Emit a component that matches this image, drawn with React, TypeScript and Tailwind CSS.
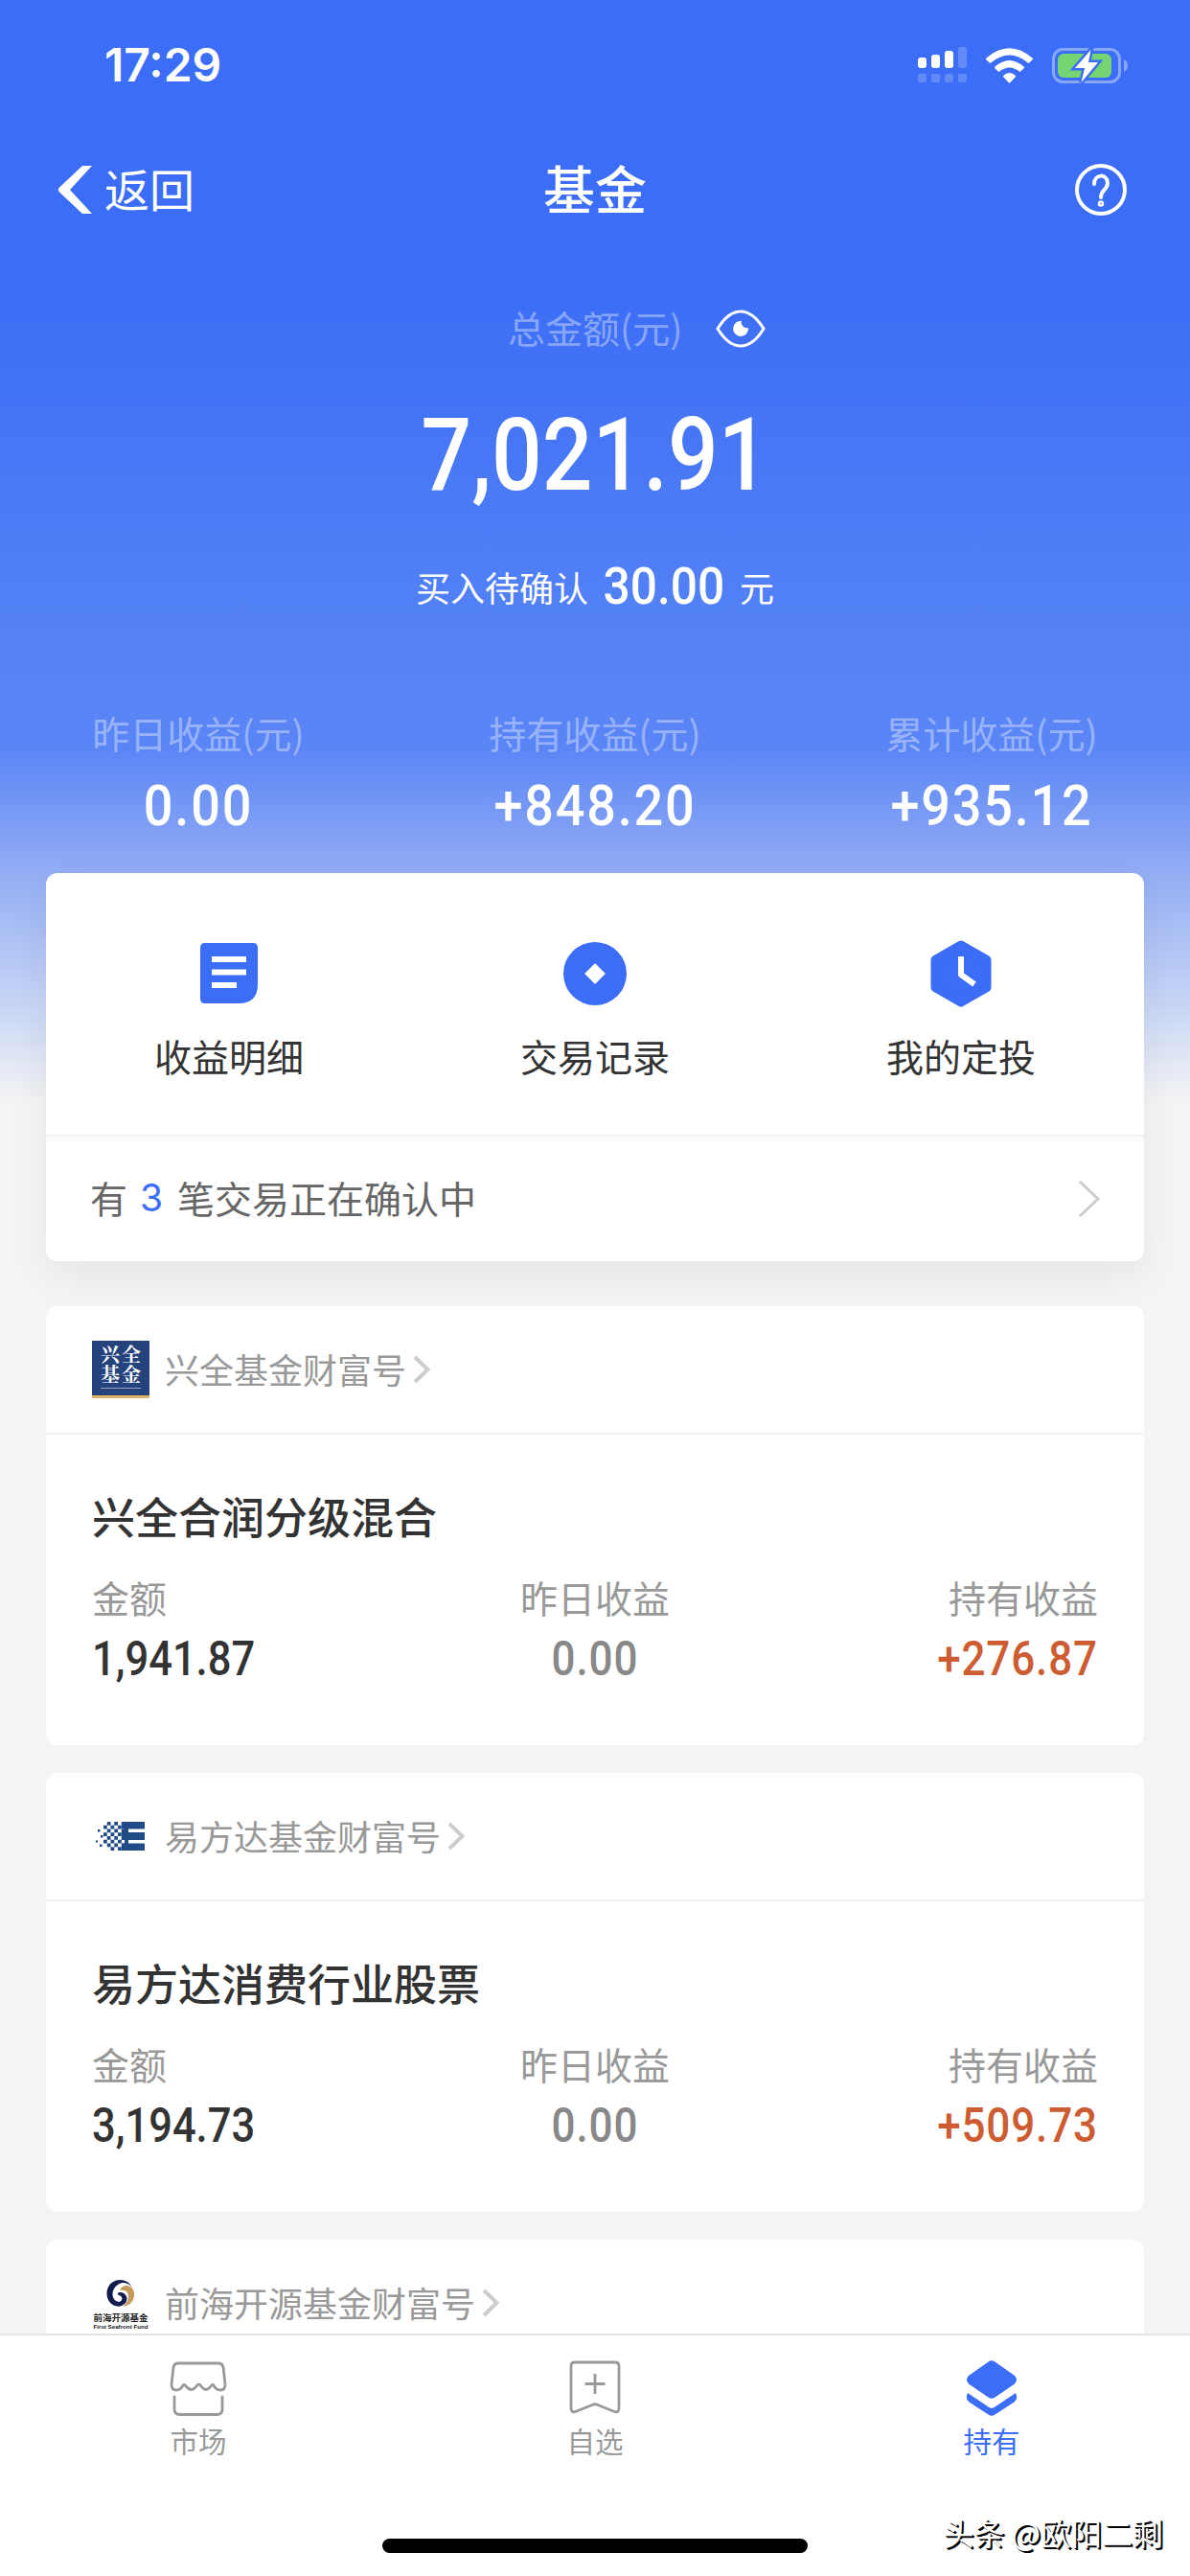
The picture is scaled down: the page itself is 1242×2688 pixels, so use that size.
import type { ReactNode } from 'react';

type Fund = {
  logo: ReactNode;
  account: string;
  name: string;
  amount: string;
  yesterday: string;
  profit: string;
};

const StatusIcons = () => (
  <svg className="w-[220px] h-[40px]" viewBox="957 47 220 40" fill="#fff">
    <rect x="958" y="59" width="9" height="11" rx="3" />
    <rect x="972" y="56" width="9" height="14" rx="3" />
    <rect x="986" y="52" width="9" height="18" rx="3" />
    <g opacity="0.2">
      <rect x="1000" y="48" width="9" height="22" rx="3" />
      <rect x="958" y="76" width="9" height="9" rx="2" />
      <rect x="972" y="76" width="9" height="9" rx="2" />
      <rect x="986" y="76" width="9" height="9" rx="2" />
      <rect x="1000" y="76" width="9" height="9" rx="2" />
    </g>
    <path d="M1029.500 59.500Q1053.500 39 1077.500 59.500Q1078.500 60.500 1077.500 61.500L1073.500 65Q1053.500 48 1033.500 65L1029.500 61.500Q1028.500 60.500 1029.500 59.500Z" />
    <path d="M1038.500 68.500Q1053.500 55.500 1068.500 68.500Q1069.500 69.500 1068.500 70.500L1064.500 74Q1053.500 65 1042.500 74L1038.500 70.500Q1037.500 69.500 1038.500 68.500Z" />
    <path d="M1047 78Q1053.500 72 1060 78L1060 79L1054.500 85Q1053.500 86 1052.500 85L1047 79Z" />
    <rect x="1099.500" y="50.500" width="69" height="34" rx="10" fill="none" stroke="#fff" strokeOpacity="0.4" strokeWidth="3" />
    <path d="M1173 61Q1177 63 1177 67.500T1173 74Z" opacity="0.4" />
    <rect x="1104" y="55" width="56" height="25" rx="6" fill="#74d572" />
    <path d="M1138.500 51L1122 70H1132L1128.500 85L1146 64H1136Z" stroke="#3b6df6" strokeWidth="5" />
    <path d="M1138.500 51L1122 70H1132L1128.500 85L1146 64H1136Z" />
  </svg>
);

const Chevron = ({ className }: { className: string }) => (
  <svg className={className} viewBox="0 0 18 30" fill="none" stroke="currentColor" strokeWidth="4">
    <path d="M2 2L15.500 15L2 28" />
  </svg>
);

const XingquanLogo = () => (
  <div className="flex h-[60px] w-[60px] flex-col items-center bg-[#24427c] border-b-3 border-[#deb264] font-['Liberation_Serif','Noto_Serif_CJK_SC','Noto_Sans_CJK_SC',serif] text-[20px] leading-[21px] font-bold text-white pt-[5px]">
    <span className="tracking-[2px] -mr-[2px]">兴全</span>
    <span className="tracking-[2px] -mr-[2px]">基金</span>
    <span className="mt-[2px] h-px w-[42px] bg-white/50" />
  </div>
);

// checkerboard cells left of the "E", as [column, row]
const cells = Array.from({ length: 48 }, (_, i) => [i % 6, Math.floor(i / 6)]).filter(
  ([c, r]) => (c + r) % 2 === 1 && !(c === 0 && (r === 7 || r === 0)),
);

const YifangdaLogo = () => (
  <svg className="h-[60px] w-[60px]" viewBox="96 1888 60 60" fill="#214b86">
    <path d="M127 1903H151V1910.500H134V1914H151V1922H134V1925.500H151V1933H127V1925.500H130V1922H127V1914H130V1910.500H127Z" />
    {cells.map(([c, r]) => (
      <rect key={`${c}-${r}`} x={108 + c * 3.75} y={1903 + r * 3.75} width="3.75" height="3.75" />
    ))}
    <path d="M102 1911h2.500v2.500h-2.500zM105 1917h2.500v2.500h-2.500zM100 1922.500h2v2h-2zM104 1926.500h2.500v2.500h-2.500z" />
  </svg>
);

const QianhaiLogo = () => (
  <div className="flex h-[60px] w-[60px] flex-col items-center pt-[5px] text-[#222]">
    <svg className="h-[30px] w-[30px] shrink-0" viewBox="0 0 30 30">
      <path d="M27 9C22 -2 5 -2 1 11C-2 23 8 31 16 28C24 25 23 15 15 14C11 14 11 16 13 17C18 18 17 24 13 24C5 23 4 11 12 6C18 2 24 5 27 9Z" fill="#0f1c4d" />
      <path d="M14 12C17 4 27 6 29 14C30 22 25 28 17 29C25 24 26 10 14 12Z" fill="#c59a5d" />
    </svg>
    <span className="mt-[5px] text-[9.500px] leading-[11px] font-bold whitespace-nowrap">前海开源基金</span>
    <span className="font-['Liberation_Sans',sans-serif] text-[6.200px] leading-[7px] font-bold whitespace-nowrap">First Seafront Fund</span>
  </div>
);

const funds: Fund[] = [
  { logo: <XingquanLogo />, account: '兴全基金财富号', name: '兴全合润分级混合', amount: '1,941.87', yesterday: '0.00', profit: '+276.87' },
  { logo: <YifangdaLogo />, account: '易方达基金财富号', name: '易方达消费行业股票', amount: '3,194.73', yesterday: '0.00', profit: '+509.73' },
  { logo: <QianhaiLogo />, account: '前海开源基金财富号', name: '', amount: '', yesterday: '', profit: '' },
];

const totals = [
  { label: '昨日收益(元)', value: '0.00' },
  { label: '持有收益(元)', value: '+848.20' },
  { label: '累计收益(元)', value: '+935.12' },
];

const FundCard = ({ fund }: { fund: Fund }) => (
  <div className="h-[458px] shrink-0 rounded-xl bg-white">
    <div className="flex h-[134px] items-center border-b-2 border-[#f0f0f0] pl-12">
      {fund.logo}
      <span className="ml-[16px] pb-[2px] text-[36px] text-[#999]">{fund.account}</span>
      <Chevron className="ml-[7px] h-[30px] w-[18px] text-[#ccc]" />
    </div>
    {fund.name && (
      <div className="px-[48px] pt-[52px]">
        <h2 className="text-[45px] leading-[66px] font-medium text-[#333]">{fund.name}</h2>
        <div className="mt-[21px] grid grid-cols-3 text-[39px] leading-[60px] text-[#999]">
          <span>金额</span>
          <span className="text-center">昨日收益</span>
          <span className="text-right">持有收益</span>
        </div>
        <div className="mt-[3px] grid grid-cols-3 font-['Roboto',sans-serif] text-[50px] leading-[64px] font-medium">
          <span className="origin-left scale-x-[0.87] text-[#333]">{fund.amount}</span>
          <span className="scale-x-[0.88] text-center tracking-[1px] text-[#888]">{fund.yesterday}</span>
          <span className="origin-right scale-x-[0.88] text-right tracking-[1px] text-[#cd5c33]">{fund.profit}</span>
        </div>
      </div>
    )}
  </div>
);

function App() {
  return (
    <div className="flex h-[2688px] w-[1242px] flex-col overflow-hidden bg-[#f4f4f4] font-['Noto_Sans_CJK_SC',sans-serif] font-normal">
      <div className="flex h-[2435px] shrink-0 flex-col overflow-hidden bg-[linear-gradient(180deg,#3b6df6_0px,#3b6df6_290px,#5784f5_700px,#5a85f6_780px,#93adf4_910px,#c8d6f5_1050px,#f4f4f4_1150px)]">
        <div className="flex h-[135px] shrink-0 items-center justify-between pr-[65px] pl-[109px] text-white">
          <span className="font-['Inter',sans-serif] text-[48px] font-semibold">17:29</span>
          <StatusIcons />
        </div>

        <div className="grid h-[125px] shrink-0 grid-cols-3 items-center px-[60px] text-white">
          <div className="flex items-center">
            <svg className="h-[50px] w-[36px]" viewBox="0 0 36 50" fill="#fff">
              <path d="M26 0H36L13 25L36 50H26L1.500 27Q0 25 1.500 23Z" />
            </svg>
            <span className="ml-[13px] pb-[3px] text-[47px]">返回</span>
          </div>
          <h1 className="pb-[4px] text-center text-[54px] font-medium">基金</h1>
          <svg className="mr-[6px] h-[54px] w-[54px] justify-self-end" viewBox="0 0 54 54" fill="none" stroke="#fff" strokeWidth="4" strokeLinecap="round">
            <circle cx="27" cy="27" r="25" />
            <path d="M20 21C20 10 34 10 34 20C34 27 27 27 27 35" />
            <circle cx="27" cy="41.500" r="1.200" />
          </svg>
        </div>

        <div className="mt-[53px] flex h-[60px] shrink-0 items-center pl-[530px]">
          <span className="w-[182px] pb-[4px] text-[39px] whitespace-nowrap text-white/40">总金额(元)</span>
          <svg className="ml-[35px] h-[40px] w-[52px]" viewBox="0 0 52 40" fill="none" stroke="#fff" strokeWidth="3">
            <path d="M2 20Q13 2 26 2T50 20Q39 38 26 38T2 20Z" />
            <path d="M27 12A8 8 0 1 0 34 19Q31 20 28.500 17.500T27 12Z" fill="#fff" stroke="none" />
          </svg>
        </div>

        <div className="mt-[41px] h-[122px] shrink-0 scale-x-[0.875] text-center font-['Roboto',sans-serif] text-[106px] leading-[122px] font-medium text-white">7,021.91</div>

        <div className="mt-[44px] flex h-[60px] shrink-0 items-baseline justify-center text-[36px] leading-[60px] text-white">
          <span>买入待确认</span>
          <span className="mx-[10px] translate-y-[2px] scale-x-[0.92] font-['Roboto',sans-serif] text-[54px] font-medium">30.00</span>
          <span>元</span>
        </div>

        <div className="mt-[94px] grid h-[177px] shrink-0 grid-cols-3 text-center">
          {totals.map((t) => (
            <div key={t.label}>
              <div className="text-[39px] leading-[60px] text-white/40">{t.label}</div>
              <div className="mt-[5px] scale-x-[0.9] font-['Roboto',sans-serif] text-[60px] leading-[84px] font-medium tracking-[2px] text-white">{t.value}</div>
            </div>
          ))}
        </div>

        <div className="mx-12 h-[405px] shrink-0 rounded-xl bg-white shadow-[0_16px_40px_rgba(0,0,0,0.06)]">
          <div className="grid h-[273px] grid-cols-3 pt-[69px] text-[39px] leading-[60px] text-[#333]">
            <div className="flex flex-col items-center">
              <svg className="h-[72px] w-[72px]" viewBox="0 0 72 72" fill="#3b6df6">
                <path d="M11 4H61Q66 4 66 9V47Q66 67 46 67H11Q6 67 6 62V9Q6 4 11 4Z" />
                <path d="M18 21H54M18 34.500H54M18 48H44" stroke="#fff" strokeWidth="6" />
              </svg>
              <span className="mt-[19px]">收益明细</span>
            </div>
            <div className="flex flex-col items-center">
              <svg className="h-[72px] w-[72px]" viewBox="0 0 72 72">
                <circle cx="36" cy="36" r="33" fill="#3b6df6" />
                <path d="M36 26.500L45.500 36L36 45.500L26.500 36Z" fill="#fff" stroke="#fff" strokeWidth="2" strokeLinejoin="round" />
              </svg>
              <span className="mt-[19px]">交易记录</span>
            </div>
            <div className="flex flex-col items-center">
              <svg className="h-[72px] w-[72px]" viewBox="0 0 72 72" fill="none" strokeLinejoin="round">
                <path d="M36 6L63 21.500V50.500L36 66L9 50.500V21.500Z" fill="#3b6df6" stroke="#3b6df6" strokeWidth="9" />
                <path d="M36 18V37L50 47" stroke="#fff" strokeWidth="6" />
              </svg>
              <span className="mt-[19px]">我的定投</span>
            </div>
          </div>
          <div className="flex h-[132px] items-center justify-between border-t-2 border-[#f2f2f2] bg-[linear-gradient(180deg,#fafafa_0px,#fff_9px)] rounded-b-xl pr-[45px] pl-[46px] text-[39px] text-[#666]">
            <div className="flex items-center pb-[4px]">
              <span>有</span>
              <span className="mr-[15px] ml-[13px] pt-[3px] font-['Inter',sans-serif] text-[#3b6df6]">3</span>
              <span>笔交易正在确认中</span>
            </div>
            <svg className="h-[40px] w-[24px]" viewBox="0 0 24 40" fill="none" stroke="#ccc" strokeWidth="3">
              <path d="M2 2L21 20L2 38" />
            </svg>
          </div>
        </div>

        <div className="mx-12 mt-[47px] flex flex-col gap-[29px]">
          {funds.map((fund) => (
            <FundCard key={fund.account} fund={fund} />
          ))}
        </div>
      </div>

      <div className="relative flex h-[253px] flex-col items-center border-t-2 border-[#e5e5e5] bg-white">
        <div className="grid w-full grid-cols-3 pt-[22px] text-[29.500px] leading-[44px] text-[#999]">
          <div className="flex flex-col items-center">
            <svg className="h-[66px] w-[66px]" viewBox="0 0 66 66" fill="none" stroke="#999" strokeWidth="2.800" strokeLinecap="round" strokeLinejoin="round">
              <path d="M12 7H54Q58 7 59 11L61 29Q61 35 56 35Q52 35 49.500 31Q48 28 46 31Q41 38 36 31Q33.500 27 31 31Q26 38 20 31Q18 28 16.500 31Q14 35 10 35Q5 35 5 29L7 11Q8 7 12 7Z" />
              <path d="M8 42V55Q8 60.500 13.500 60.500H52.500Q58 60.500 58 55V42" />
            </svg>
            <span className="-mt-[1px]">市场</span>
          </div>
          <div className="flex flex-col items-center">
            <svg className="h-[66px] w-[66px]" viewBox="0 0 66 66" fill="none" stroke="#999" strokeWidth="2.800" strokeLinejoin="round">
              <path d="M12 6H54Q58 6 58 10V53Q58 60 52 57L36 50.500Q33 49 30 50.500L14 57Q8 60 8 53V10Q8 6 12 6Z" />
              <path d="M33 18V39M22.500 28.500H43.500" />
            </svg>
            <span className="-mt-[1px]">自选</span>
          </div>
          <div className="flex flex-col items-center">
            <svg className="h-[66px] w-[66px]" viewBox="0 0 66 66" fill="#3b6df6">
              <path d="M29.500 5.500Q33 3 36.500 5.500L57 20Q61 24 57 28.500L36.500 42.500Q33 45 29.500 42.500L9 28.500Q5 24 9 20Z" />
              <path d="M8 38L29.500 52.500Q33 55 36.500 52.500L58 38Q61 44 56.500 47.500L36.500 60.500Q33 63 29.500 60.500L9.500 47.500Q5 44 8 38Z" />
            </svg>
            <span className="-mt-[1px] text-[#3b6df6]">持有</span>
          </div>
        </div>
        <div className="mt-[81px] h-[15px] w-[444px] rounded-full bg-black" />
        <span className="absolute right-[28px] bottom-[24px] text-[32px] leading-[44px] text-white [text-shadow:2px_2px_0_#000,1px_1px_0_#000]">头条 @欧阳二剩</span>
      </div>
    </div>
  );
}

export default App;
